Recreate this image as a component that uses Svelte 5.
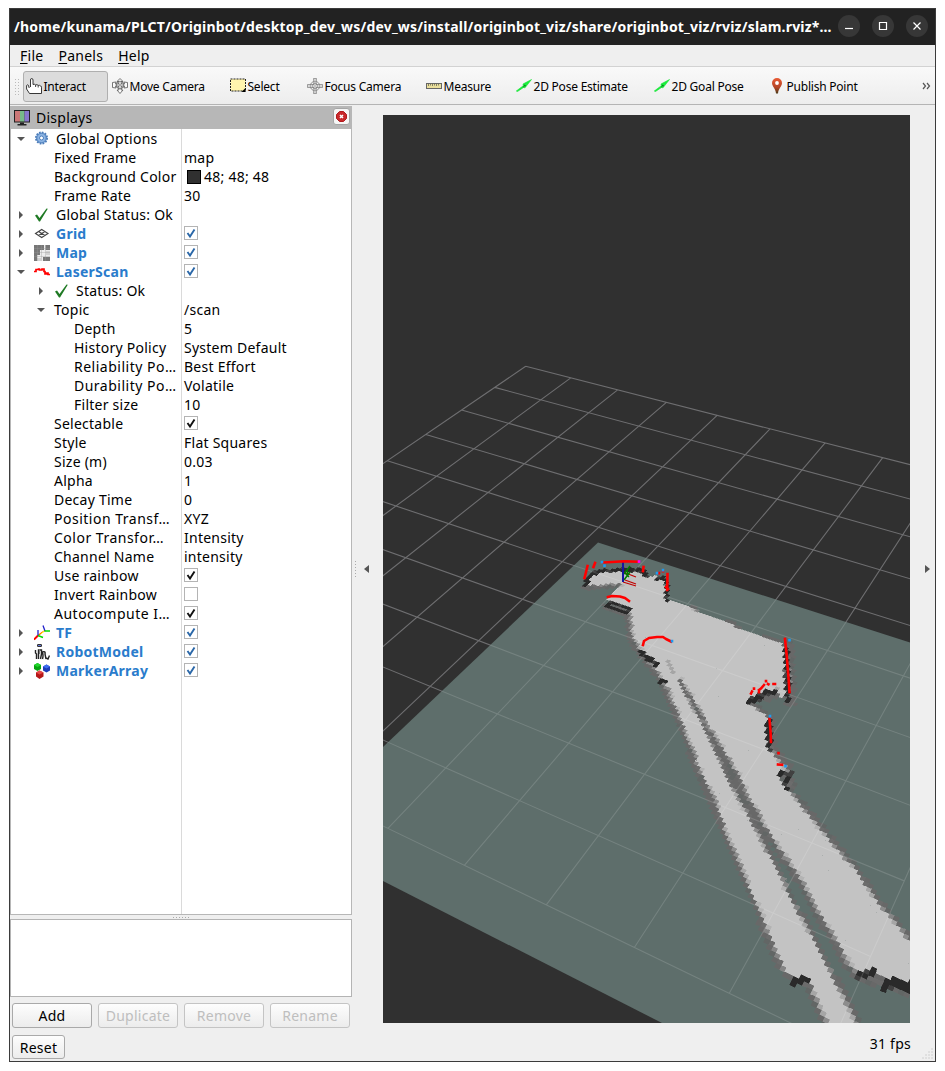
<script>
  const tools = [
    { icon: 'hand', label: 'Interact', w: 85, active: true },
    { icon: 'move', label: 'Move Camera', w: 118 },
    { icon: 'select', label: 'Select', w: 77 },
    { icon: 'focus', label: 'Focus Camera', w: 119 },
    { icon: 'ruler', label: 'Measure', w: 90 },
    { icon: 'arrow', label: '2D Pose Estimate', w: 138 },
    { icon: 'arrow', label: '2D Goal Pose', w: 115 },
    { icon: 'pin', label: 'Publish Point', w: 120 }
  ];

  const rows = [
    { n: 'Global Options', lvl: 0, open: true, icon: 'gear' },
    { n: 'Fixed Frame', lvl: 1, v: 'map' },
    { n: 'Background Color', lvl: 1, v: '48; 48; 48', swatch: true },
    { n: 'Frame Rate', lvl: 1, v: '30' },
    { n: 'Global Status: Ok', lvl: 0, closed: true, icon: 'ok' },
    { n: 'Grid', lvl: 0, closed: true, icon: 'grid', blue: true, c: 1 },
    { n: 'Map', lvl: 0, closed: true, icon: 'map', blue: true, c: 1 },
    { n: 'LaserScan', lvl: 0, open: true, icon: 'laser', blue: true, c: 1 },
    { n: 'Status: Ok', lvl: 1, closed: true, icon: 'ok' },
    { n: 'Topic', lvl: 1, open: true, v: '/scan' },
    { n: 'Depth', lvl: 2, v: '5' },
    { n: 'History Policy', lvl: 2, v: 'System Default' },
    { n: 'Reliability Po…', lvl: 2, v: 'Best Effort' },
    { n: 'Durability Po…', lvl: 2, v: 'Volatile' },
    { n: 'Filter size', lvl: 2, v: '10' },
    { n: 'Selectable', lvl: 1, c: 1 },
    { n: 'Style', lvl: 1, v: 'Flat Squares' },
    { n: 'Size (m)', lvl: 1, v: '0.03' },
    { n: 'Alpha', lvl: 1, v: '1' },
    { n: 'Decay Time', lvl: 1, v: '0' },
    { n: 'Position Transf…', lvl: 1, v: 'XYZ' },
    { n: 'Color Transfor…', lvl: 1, v: 'Intensity' },
    { n: 'Channel Name', lvl: 1, v: 'intensity' },
    { n: 'Use rainbow', lvl: 1, c: 1 },
    { n: 'Invert Rainbow', lvl: 1, c: 0 },
    { n: 'Autocompute I…', lvl: 1, c: 1 },
    { n: 'TF', lvl: 0, closed: true, icon: 'tf', blue: true, c: 1 },
    { n: 'RobotModel', lvl: 0, closed: true, icon: 'robot', blue: true, c: 1 },
    { n: 'MarkerArray', lvl: 0, closed: true, icon: 'marker', blue: true, c: 1 }
  ];

  // Perspective projection of the ground plane, one unit per metre
  function project(i, j) {
    const w = 1 - 0.018996 * i - 0.034158 * j;
    return [(34.232 * i - 47.829 * j + 525.7) / w, (4.3625 * i + 7.8635 * j + 366.3) / w];
  }
  const fmt = (p) => p[0].toFixed(2) + ' ' + p[1].toFixed(2);

  let gridPath = '';
  for (let k = 0; k <= 10; k++) {
    gridPath += `M${fmt(project(k, 0))}L${fmt(project(k, 10))}M${fmt(project(0, k))}L${fmt(project(10, k))}`;
  }

  const freeArea = [
    [585, 586], [588, 579], [593, 573], [602, 571], [642, 571], [647, 576], [663, 577], [666, 593], [669, 600],
    [685, 605], [697, 611], [727, 622], [743, 630], [763, 636], [780, 643], [784, 648], [784, 673], [785, 698],
    [776, 694], [770, 689], [758, 698], [750, 703], [759, 710], [767, 716], [768, 720], [767, 750], [774, 754],
    [782, 761], [790, 771], [781, 776], [783, 788], [790, 792], [800, 803], [820, 827], [843, 855], [854, 867],
    [873, 895], [890, 916], [912, 943], [912, 988], [887, 980], [875, 973], [857, 973], [850, 967], [840, 947],
    [820, 917], [803, 884], [787, 860], [768, 832], [755, 809], [737, 774], [720, 746], [703, 717], [690, 695],
    [680, 680], [679, 681], [690, 702], [697, 714], [712, 743], [729, 780], [748, 814], [767, 850], [777, 868],
    [793, 903], [807, 927], [823, 957], [840, 990], [859, 1027], [828, 1027], [817, 1003], [810, 985],
    [787, 974], [773, 947], [763, 920], [750, 890], [737, 858], [725, 830], [717, 807], [697, 763], [680, 720],
    [667, 688], [658, 673], [641, 652], [632, 637], [629, 612], [624, 604], [608, 600], [622, 584]
  ];
  const borders = [
    { w: 5, p: [[629, 612], [632, 637], [641, 652], [658, 673], [667, 688], [680, 720], [697, 763], [717, 807], [725, 830], [737, 858], [750, 890], [763, 920], [773, 947], [787, 974], [808, 984], [817, 1003], [828, 1027]] },
    { w: 5, p: [[680, 680], [690, 695], [703, 717], [720, 746], [737, 774], [755, 809], [768, 832], [787, 860], [803, 884], [820, 917], [840, 947], [850, 967], [857, 976], [887, 984], [912, 992]] },
    { w: 4, p: [[680, 680], [690, 702], [697, 714], [712, 743], [729, 780], [748, 814], [767, 850], [777, 868], [793, 903], [807, 927], [823, 957], [840, 990], [859, 1027]] },
    { w: 4, p: [[790, 792], [800, 803], [820, 827], [843, 855], [854, 867], [873, 895], [890, 916], [912, 943]] },
    { w: 3, p: [[585, 587], [622, 584]] },
    { w: 3, p: [[750, 703], [759, 710], [767, 716]] },
    { w: 6, p: [[787, 646], [789, 670], [790, 701]] },
    { w: 7, p: [[768, 695], [777, 690]] },
    { w: 6, p: [[769, 722], [771, 750], [786, 768], [790, 788]] },
    { w: 2, p: [[691, 607], [698, 611]] },
    { w: 2, p: [[727, 622], [740, 628]] },
    { w: 2, p: [[765, 637], [780, 643]] },
    { w: 4, p: [[607, 607], [627, 613]] }
  ];
  const walls = [
    { w: 1.7, p: [[585, 586], [589, 577], [594, 573], [604, 571], [622, 570], [642, 570], [646, 576]] },
    { w: 1.6, p: [[657, 580], [664, 577], [667, 584], [667, 600]] },
    { w: 1.8, p: [[607, 606], [612, 603], [629, 608], [626, 612], [607, 606]] },
    { w: 2.4, p: [[642, 653], [648, 658], [655, 664]] },
    { w: 1.8, p: [[660, 684], [665, 680]] },
    { w: 2.2, p: [[786, 649], [787, 670], [788, 698], [789, 702]] },
    { w: 3, p: [[749, 701], [757, 699], [765, 692], [774, 693]] },
    { w: 2.6, p: [[769, 720], [769, 750]] },
    { w: 2.4, p: [[781, 774], [790, 774], [784, 784], [787, 788]] },
    { w: 3.2, p: [[793, 982], [802, 979], [809, 982]] },
    { w: 3.8, p: [[858, 975], [872, 973]] },
    { w: 5, p: [[884, 989], [889, 983], [897, 985], [912, 987]] }
  ];
  const smudges = [{ w: 1.3, p: [[667, 661], [673, 672]] }];

  function inside(x, y, poly) {
    let hit = false;
    for (let a = 0, b = poly.length - 1; a < poly.length; b = a++) {
      const [xa, ya] = poly[a];
      const [xb, yb] = poly[b];
      if (ya > y !== yb > y && x < ((xb - xa) * (y - ya)) / (yb - ya) + xa) hit = !hit;
    }
    return hit;
  }
  function near(x, y, list) {
    let best = 9;
    for (const { w, p } of list) {
      for (let k = 1; k < p.length; k++) {
        const dx = p[k][0] - p[k - 1][0];
        const dy = p[k][1] - p[k - 1][1];
        let t = ((x - p[k - 1][0]) * dx + (y - p[k - 1][1]) * dy) / (dx * dx + dy * dy);
        t = Math.max(0, Math.min(1, t));
        const d = Math.hypot(x - p[k - 1][0] - t * dx, y - p[k - 1][1] - t * dy);
        best = Math.min(best, d / w);
      }
    }
    return best;
  }
  function noise(a, b) {
    const s = Math.sin(a * 12.9898 + b * 78.233) * 43758.5453;
    return s - Math.floor(s);
  }
  function shade(x, y, a, b) {
    if (x < 575 || x > 918 || y < 560 || y > 1032) return null;
    const r = noise(a, b);
    const wall = near(x, y, walls);
    if (wall < 1) return r < 0.75 ? '#2a2a2a' : '#414141';
    const free = inside(x, y, freeArea);
    const edge = near(x, y, borders);
    if (free) {
      if (near(x, y, smudges) < 1) return '#a5a5a5';
      if (edge < 0.28) return r < 0.5 ? '#8c8c8c' : '#a6a6a6';
      if (edge < 0.55 && r < 0.35) return '#b3b3b3';
      return '#c3c3c3';
    }
    if (edge < 0.3) return r < 0.4 ? '#858585' : '#6c6c6c';
    if (edge < 1) return r < 0.8 ? '#686868' : '#626665';
    return null;
  }

  // Occupancy cells are 5 cm wide; equal neighbours in a row are merged
  const layers = {};
  const step = 0.05;
  for (let b = 70; b < 260; b++) {
    let start = 0;
    let current = null;
    for (let a = 60; a <= 300; a++) {
      const [x, y] = project((a + 0.5) * step, (b + 0.5) * step);
      const tone = a === 300 ? null : shade(x, y, a, b);
      if (tone !== current) {
        if (current) {
          const q = [[start, b], [a, b], [a, b + 1], [start, b + 1]].map(([u, v]) => fmt(project(u * step, v * step)));
          layers[current] = (layers[current] || '') + 'M' + q.join('L') + 'Z';
        }
        start = a;
        current = tone;
      }
    }
  }
  const order = ['#c3c3c3', '#b3b3b3', '#a6a6a6', '#a5a5a5', '#8c8c8c', '#858585', '#6c6c6c', '#686868', '#626665', '#414141', '#2a2a2a'];
</script>

{#snippet icon(name)}
  <svg class="icon" width="16" height="16" viewBox="0 0 16 16">
    {#if name === 'hand'}
      <path d="M4.500 9V2q0-1.500 1.200-1.500T7 2v4.500q1.400-.8 2.500.4 1.500-.8 2.700.5 1.500-.5 2.300.6 1-.1 1 1.200v6.300h-12L.6 11V7.500q.8-1.200 1.800-.2L3.200 10" fill="#fff" stroke="#222" stroke-width=".9" />
      <path d="M9.600 7v2M12.200 7.500v2" stroke="#333" fill="none" stroke-width=".9" />
    {:else if name === 'move'}
      <g fill="#fafafa" stroke="#555" stroke-width=".8">
        <path d="M8 .5l3 3H9.200V6h3.300L12 4l3.500.5v5L12 10l.5-2H9.200v4H11l-3 3.500L5 12h1.800V8H3.500L4 10 .5 9.500v-5L4 4l-.5 2h3.300V3.500H5z" />
        <circle cx="8" cy="7" r="3.800" fill="none" stroke-width=".7" /><path d="M5.300 4.500l5.400 5M10.700 4.500l-5.400 5" stroke-width=".5" />
      </g>
    {:else if name === 'select'}
      <rect x=".5" y="1" width="15" height="12" fill="#fff4ae" stroke="#222" stroke-dasharray="2 1" />
      <path d="M15.500 10v4h-4z" fill="#000" />
    {:else if name === 'focus'}
      <g fill="none" stroke="#777" stroke-width=".8"><circle cx="8" cy="8" r="4.700" /><circle cx="8" cy="8" r="2.600" />
        <path d="M6.500.5h3L9 6.500l6.500 0v3L9 9.500l.5 6h-3L7 9.500l-6.500 0v-3H7z" fill="#eee" fill-opacity=".4" stroke-width=".7" /><path d="M8 1v14M1 8h14" stroke-width=".4" /></g>
    {:else if name === 'ruler'}
      <rect x=".5" y="5.500" width="15" height="5" fill="#eadf9c" stroke="#666" />
      <path d="M2.500 5.500v2.500M4.500 5.500v2M6.500 5.500v2.500M8.500 5.500v2M10.500 5.500v2.500M12.500 5.500v2" stroke="#665" stroke-width=".8" />
    {:else if name === 'arrow'}
      <path d="M.3 13L1.500 13.500l6-4 1.500.3L15.500 1.500 7 6l.3 1.700z" fill="#19f03c" stroke="#10e030" stroke-width=".6" /><path d="M8 7l2 1M7.500 9.300l1-2" stroke="#0a7e1c" stroke-width=".9" />
    {:else if name === 'pin'}
      <defs><linearGradient id="pin" x2="0" y2="1"><stop offset="0" stop-color="#e95b35" /><stop offset=".6" stop-color="#b54426" /><stop offset="1" stop-color="#4b3b18" /></linearGradient></defs>
      <path d="M8 0a5 5 0 0 1 5 5c0 3.500-3.500 5-4 10.500H7C6.500 10 3 8.500 3 5a5 5 0 0 1 5-5z" fill="url(#pin)" /><circle cx="8" cy="5" r="1.900" fill="#fff" />
    {:else if name === 'gear'}
      <circle cx="7.500" cy="7" r="5.600" fill="#83abdc" stroke="#4c7cb8" stroke-width="1.800" stroke-dasharray="1.700 1.200" />
      <circle cx="7.500" cy="7" r="4.600" fill="#8db5e4" stroke="#4f80bd" stroke-width=".8" /><circle cx="7.500" cy="7" r="2" fill="#fff" stroke="#4f80bd" />
    {:else if name === 'ok'}
      <path d="M1 8.500l2-1 2.500 3.500L12.500 1.500l1.300.2L6 14.500H5z" fill="#1f7a24" />
    {:else if name === 'grid'}
      <path d="M1.500 7.500l6.200-4 6.300 4-6.300 4zM4.600 5.500l6.300 4M10.900 5.500l-6.300 4" fill="none" stroke="#444" stroke-width="1.100" />
    {:else if name === 'map'}
      <rect width="16" height="16" fill="#ededed" /><path d="M0 0h10v5H6v5H0zM11.500 0H16v5h-4.500zM0 10h3v6H0zM9 12h7v4H9z" fill="#777" /><path d="M12 6h4v4h-4zM3 13h4v3H3z" fill="#d2d2d2" /><path d="M3.500 0v16M7.500 0v16M11.500 0v16M0 3.500h16M0 7.500h16M0 11.500h16" stroke="#999" stroke-opacity=".35" />
    {:else if name === 'laser'}
      <path d="M0 7.500h2V5.500h2.500V5h1v1H8V5h2v2.500h1V10h1.500V9H14v1.500h2" fill="none" stroke="#f00" stroke-width="1.700" />
    {:else if name === 'tf'}
      <path d="M0 14.500l4-4 4-3 3-2" stroke="#f60" stroke-width="1.300" fill="none" /><path d="M0 14.500l4-4" stroke="#f00" stroke-width="1.800" />
      <path d="M4 10.500V5M11 6L9 .5" stroke="#22c" stroke-width="1.300" /><path d="M4 10.500l5 2M10.500 6H16" stroke="#0d0" stroke-width="1.400" /><path d="M7 9l3-3" stroke="#ff0" />
    {:else if name === 'robot'}
      <rect x="3" y="0" width="5" height="3" rx="1.200" fill="#333" /><rect x="4" y="1" width="3" height="1" fill="#67d" />
      <path d="M1.500 6v3l1 1v5M4.500 15V6h3v4l-1 5M8.500 15c1-3 .5-5 0-7 2-1 3 0 2.500 2l1 5M12 14l2 1 1.500-3.500" fill="none" stroke="#222" stroke-width="1.400" /><path d="M5.500 5v5" stroke="#777" />
    {:else if name === 'marker'}
      <path d="M3.500 0L7 2v4L3.500 8 0 6V2z" fill="#07a510" /><path d="M3.500 0L7 2 3.500 4 0 2z" fill="#22d62c" />
      <path d="M12.500 1.500L16 3.500v4l-3.500 2-3.500-2v-4z" fill="#1d3db8" /><path d="M12.500 1.500L16 3.500l-3.500 2-3.500-2z" fill="#3e6df0" />
      <path d="M5.500 7.500L9.500 9.500v4l-4 2.500L2 13.500v-4z" fill="#b51818" /><path d="M5.500 7.500l4 2-4 2-3.500-2z" fill="#e84949" />
    {/if}
  </svg>
{/snippet}

<div class="window">
  <header class="title">
    <span>/home/kunama/PLCT/Originbot/desktop_dev_ws/dev_ws/install/originbot_viz/share/originbot_viz/rviz/slam.rviz*…</span>
    <div class="controls">
      <svg width="22" height="22"><circle cx="11" cy="11" r="11" /><path d="M7 13.500h8" /></svg>
      <svg width="22" height="22"><circle cx="11" cy="11" r="11" /><path d="M7.500 7.500h7v7h-7z" /></svg>
      <svg width="22" height="22"><circle cx="11" cy="11" r="11" /><path d="M7.500 7.500l7 7m0-7l-7 7" /></svg>
    </div>
  </header>
  <nav class="menu"><span><u>F</u>ile</span><span><u>P</u>anels</span><span><u>H</u>elp</span></nav>
  <div class="toolbar">
    <i class="grip"></i>
    {#each tools as t}
      <div class="tool" class:active={t.active} style="width:{t.w}px">{@render icon(t.icon)}<span>{t.label}</span></div>
    {/each}
    <svg class="more" width="9" height="8"><path d="M1 1l2.500 3L1 7M5 1l2.500 3L5 7" /></svg>
  </div>
  <div class="body">
    <aside>
      <div class="dock">
        <svg width="16" height="16" viewBox="0 0 16 16"><rect width="16" height="12.500" fill="#222" /><rect x="1" y="1" width="5" height="10.500" fill="#c77" /><rect x="6" y="1" width="4.500" height="10.500" fill="#7b8" /><rect x="10.500" y="1" width="4.500" height="10.500" fill="#87c" /><path d="M6 12.500h4v1.500h2.500v1.500h-9V14H6z" fill="#222" /></svg>
        <span>Displays</span>
        <div class="close"><svg width="11" height="11"><path d="M3.500.5h4l3 3v4l-3 3h-4l-3-3v-4z" fill="#c8282b" stroke="#b01a1d" /><path d="M4 4l3 3M7 4L4 7" stroke="#fff" stroke-width="1.500" /></svg></div>
      </div>
      <div class="tree">
        {#each rows as r}
          <div class="row">
            <div class="name l{r.lvl}">
              <svg class="twist" width="8" height="8">
                {#if r.open}<path d="M0 2h8L4 6z" />{:else if r.closed}<path d="M2 0v8l4-4z" />{/if}
              </svg>
              {#if r.icon}{@render icon(r.icon)}{/if}
              <span class:blue={r.blue} class:iconic={r.icon} class:cut={r.n.endsWith('…')}>{r.n}</span>
            </div>
            <div class="value">
              {#if r.swatch}<i class="swatch"></i>{/if}
              {#if r.c !== undefined}
                <svg class="check" class:bluecheck={r.blue} width="14" height="14"><rect x=".5" y=".5" width="13" height="13" />{#if r.c}<path d="M3.500 7l2.500 3.500L10.500 3.500" />{/if}</svg>
              {:else}{r.v ?? ''}{/if}
            </div>
          </div>
        {/each}
      </div>
      <div class="split"><i></i></div>
      <div class="help"></div>
      <div class="buttons"><button>Add</button><button disabled>Duplicate</button><button disabled>Remove</button><button disabled>Rename</button></div>
    </aside>
    <div class="handle"><i></i><svg width="5" height="8"><path d="M5 0v8L0 4z" /></svg></div>
    <svg class="view" width="527" height="908" viewBox="383 115 527 908">
      <rect x="383" y="115" width="527" height="908" fill="#303030" />
      <path d={gridPath} stroke="#6e6e70" stroke-width="1.100" fill="none" />
      <path d="M598 542.500L383 747V881L662 1023H910V642.500z" fill="#5e6e6b" />
      <g shape-rendering="crispEdges" stroke-width=".5">
        {#each order as tone}<path d={layers[tone]} fill={tone} stroke={tone} />{/each}
      </g>
      <path d={gridPath} stroke="#fff" stroke-opacity=".14" stroke-width="1.100" fill="none" clip-path="url(#mapclip)" />
      <clipPath id="mapclip"><path d="M598 542.500L383 747V881L662 1023H910V642.500z" /></clipPath>
      <g fill="none" stroke="#c00000" stroke-width="1.200">
        <path d="M623 572l13 5M625 580l11 4M623 582l13 4" />
        <path d="M624 574l6-8M624 580l6-8M627 570l1 5M625 573l4 4" stroke="#007c00" stroke-width="1.500" />
        <path d="M623 561v21" stroke="#1616a0" stroke-width="2" />
      </g>
      <g class="scan">
        <path d="M603 562.500l9-.5 12-.8 14 .5M587.500 566l-3 12M595 563l-1.500 4M643.500 567l-.5 4M667.500 574l-.3 16M666 587l2 2" />
        <path d="M608 597l4-1 8 .5 5 1.500 4 3M643 645l1-4 5-3 8-1h6l3 2 5 2.500M785 639l1.500 14L788.500 678l1 14" />
        <path d="M751 693.500l1-2M754 688.500v.1M759 690l2-1.500 3-3.500M766 681v.1M768 684l.5 .3M773.500 684h1.500M759 692v.1" />
        <path d="M769.500 719l1 12 .5 11M778.500 753v.1M778 764.500l4 .3M663 571v.1M659 573v.1" />
        <path d="M639 561.500v.1" stroke="#f0f" /><path d="M602 562v.1M604.500 565.500v.1M657 573v.1M663 570v.1M672 641v.1M789.500 640v.1M770 716v.1M785.500 766v.1" stroke="#1d9bf0" />
      </g>
    </svg>
    <div class="handle right"><svg width="5" height="8"><path d="M0 0v8l5-4z" /></svg></div>
  </div>
  <footer><button>Reset</button><span>31 fps</span>
    <svg class="size" width="11" height="11"><path d="M10 .5v10M7 3.500v7M4 6.500v4M1 9.500v1" /></svg></footer>
</div>

<style>
  :global(body) { background: #fff; overflow: hidden; }
  .window {
    box-sizing: border-box; width: 927px; height: 1054px; margin: 8px 0 0 9px; border: 1px solid #3b3b3b;
    background: #efefef; display: flex; flex-direction: column; color: #000;
    font: 14px/19px "Noto Sans", sans-serif; white-space: nowrap; letter-spacing: .25px;
  }
  .title { height: 36px; box-sizing: border-box; background: #222; color: #fff; display: flex; align-items: center; justify-content: space-between; padding: 0 7px 2px 4px; font-weight: 700; font-size: 14px; letter-spacing: .18px; flex: none; }
  .controls { display: flex; gap: 12px; }
  .controls svg { fill: #373737; stroke: none; }
  .controls path { fill: none; stroke: #fff; stroke-width: 1.2; }
  .menu { height: 22px; box-sizing: border-box; display: flex; gap: 15px; padding: 0 0 0 10px; align-items: center; border-bottom: 1px solid #d2d2d2; flex: none; }
  u { text-underline-offset: 2px; }
  .toolbar { height: 38px; box-sizing: border-box; background: linear-gradient(#f9f9f9, #ededed); border-bottom: 1px solid #b4b4b4; display: flex; align-items: center; flex: none; font-size: 12px; letter-spacing: -.22px; padding-top: 1px; }
  .grip { width: 5px; height: 17px; margin: 0 4px; flex: none; background: radial-gradient(circle, #bbb 0.7px, transparent 1px) 0 0 / 3px 3px; }
  .tool { height: 31px; box-sizing: border-box; display: flex; align-items: center; gap: 1.5px; padding-left: 3px; flex: none; border: 1px solid transparent; }
  .tool span { padding-top: 1px; }
  .active { background: #dcdcdc; border-color: #afafaf; border-radius: 3px; padding-left: 2px; }
  .more { margin-left: auto; margin-right: 4px; fill: none; stroke: #555; stroke-width: 1.2; }
  .icon { flex: none; }
  .body { height: 917px; display: flex; align-items: flex-start; flex: none; }
  aside { width: 342px; padding-top: 1px; }
  .dock { height: 23px; background: #b7b7b7; display: flex; align-items: center; padding: 0 2px 0 4px; gap: 6px; box-sizing: border-box; }
  .close { width: 17px; height: 17px; box-sizing: border-box; margin: -3px 0 0 auto; border: 1px solid #a6a6a6; border-radius: 3px; background: #f6f6f6; display: grid; place-items: center; }
  .tree { height: 786px; box-sizing: border-box; border: solid #b7b7b7; border-width: 0 1px 1px; background: linear-gradient(90deg, #fff 170px, #dadada 170px, #dadada 171px, #fff 171px); }
  .row { height: 19px; display: flex; align-items: center; }
  .name { width: 171px; display: flex; align-items: center; box-sizing: border-box; padding-left: 6px; }
  .name.l1 { padding-left: 26px; }
  .name.l2 { padding-left: 46px; }
  .twist { flex: none; margin-right: 9px; fill: #555; }
  .name .iconic { margin-left: 6px; }
  .cut { letter-spacing: .5px; }
  .blue { color: #2a7ccc; font-weight: 700; }
  .value { padding-left: 2px; display: flex; align-items: center; }
  .swatch { width: 12px; height: 12px; background: #303030; border: 1px solid #000; margin: 0 3px 0 3px; box-sizing: content-box; }
  .check { fill: #fff; stroke: #b4b4b4; margin-top: -2px; }
  .check path { fill: none; stroke: #111; stroke-width: 1.9; }
  .bluecheck path { stroke: #2a67a8; }
  .split { height: 4px; display: grid; place-items: center; }
  .split i { width: 17px; height: 1px; background: repeating-linear-gradient(90deg, #aaa 0 1px, transparent 1px 3px); }
  .help { height: 78px; box-sizing: border-box; border: 1px solid #b4b4b4; background: #fff; }
  .buttons { display: flex; gap: 6px; padding: 6px 2px 0; }
  button { font: inherit; letter-spacing: inherit; color: #000; width: 80px; height: 25px; padding: 0; border: 1px solid #a9a9a9; border-radius: 3px; background: linear-gradient(#fdfdfd, #ececec); }
  button:disabled { color: #bebebe; border-color: #c4c4c4; }
  .handle { width: 31px; height: 917px; box-sizing: border-box; display: flex; align-items: center; gap: 8px; padding: 11px 0 0 3px; fill: #555; }
  .handle i { width: 1px; height: 17px; background: repeating-linear-gradient(#aaa 0 1px, transparent 1px 3px); }
  .right { width: 25px; padding-left: 15px; }
  .view { margin-top: 10px; display: block; flex: none; }
  .scan { fill: none; stroke: #f00; stroke-width: 2.6; stroke-linecap: square; stroke-linejoin: round; }
  footer { flex: 1; display: flex; align-items: center; justify-content: space-between; padding: 0 24px 0 2px; position: relative; }
  footer button { width: 53px; height: 24px; margin-top: 11px; }
  footer span { margin-top: 4px; }
  .size { position: absolute; right: 2px; bottom: 2px; stroke: #b0b0b0; stroke-dasharray: 1 2; }
</style>
